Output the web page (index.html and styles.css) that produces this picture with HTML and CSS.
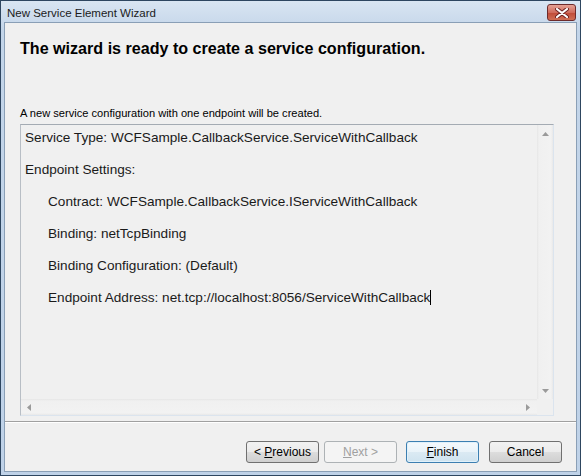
FILE: index.html
```html
<!DOCTYPE html>
<html lang="en">
<head>
    <meta charset="UTF-8">
    <title>New Service Element Wizard</title>
    <link rel="stylesheet" href="styles.css">
</head>
<body>
    <div class="window">
        <div class="titlebar">
            <span class="title">New Service Element Wizard</span>
            <div class="close-btn">
                <svg width="14" height="10" viewBox="0 0 14 10">
                    <path d="M2 1 L12 9 M12 1 L2 9" stroke="#6b2020" stroke-width="4" stroke-linecap="round"/>
                    <path d="M2 1 L12 9 M12 1 L2 9" stroke="#ffffff" stroke-width="2.2" stroke-linecap="round"/>
                </svg>
            </div>
        </div>
        <div class="client">
            <h1 class="heading">The wizard is ready to create a service configuration.</h1>
            <p class="desc">A new service configuration with one endpoint will be created.</p>
            <div class="textbox">
                <div class="text-area">
                    <p>Service Type: WCFSample.CallbackService.ServiceWithCallback</p>
                    <p>Endpoint Settings:</p>
                    <p class="indent">Contract: WCFSample.CallbackService.IServiceWithCallback</p>
                    <p class="indent">Binding: netTcpBinding</p>
                    <p class="indent">Binding Configuration: (Default)</p>
                    <p class="indent">Endpoint Address: net.tcp://localhost:8056/ServiceWithCallback<span class="caret"></span></p>
                </div>
                <div class="vscroll">
                    <svg width="7" height="4" viewBox="0 0 7 4"><polygon points="0,4 7,4 3.5,0" fill="#9a9a9a"/></svg>
                    <svg width="7" height="4" viewBox="0 0 7 4"><polygon points="0,0 7,0 3.5,4" fill="#9a9a9a"/></svg>
                </div>
                <div class="hscroll">
                    <svg width="4" height="7" viewBox="0 0 4 7"><polygon points="4,0 4,7 0,3.5" fill="#9a9a9a"/></svg>
                    <svg width="4" height="7" viewBox="0 0 4 7"><polygon points="0,0 0,7 4,3.5" fill="#9a9a9a"/></svg>
                </div>
                <div class="corner"></div>
            </div>
            <div class="footer">
                <button class="btn">&lt; <u>P</u>revious</button>
                <button class="btn disabled"><u>N</u>ext &gt;</button>
                <button class="btn default"><u>F</u>inish</button>
                <button class="btn">Cancel</button>
            </div>
        </div>
    </div>
</body>
</html>
```

FILE: styles.css
```css
body {
    margin: 0;
    background: #f0f0f0;
}
.window {
    width: 581px;
    height: 476px;
    box-sizing: border-box;
    border: 1px solid #2e4660;
    background: linear-gradient(#d9e5f2, #c3d5e9 30px, #bfd2e8);
    padding: 0 3px 3px;
    display: flex;
    flex-direction: column;
}
.titlebar {
    height: 21px;
    display: flex;
    align-items: center;
    justify-content: space-between;
}
.title {
    font-family: "Liberation Sans", Arial, sans-serif;
    font-size: 11.5px;
    color: #1b1b1b;
    padding-left: 3px;
    padding-top: 2px;
}
.close-btn {
    width: 29px;
    height: 17px;
    margin-right: 1px;
    margin-top: 2px;
    box-sizing: border-box;
    border: 1px solid #6d2b2b;
    border-radius: 3px;
    background: linear-gradient(#e5a195, #d06b5b 50%, #c04a37 51%, #cf6e54);
    display: flex;
    align-items: center;
    justify-content: center;
}
.client {
    flex: 1;
    background: #f0f0f0;
    border: 1px solid #8a9fb6;
    display: flex;
    flex-direction: column;
}
.heading {
    font-family: "Liberation Sans", Arial, sans-serif;
    font-size: 16.1px;
    font-weight: bold;
    color: #000;
    margin: 15px 0 0 15px;
    line-height: 20px;
}
.desc {
    font-family: "Liberation Sans", Arial, sans-serif;
    font-size: 11.1px;
    color: #000;
    margin: 49px 0 0 15px;
    line-height: 13px;
}
.textbox {
    margin: 4px 22px 0 15px;
    height: 292px;
    box-sizing: border-box;
    border: 1px solid #dbe4ee;
    border-top-color: #a4abb3;
    border-left-color: #b8bec5;
    display: grid;
    grid-template-columns: 1fr 16px;
    grid-template-rows: 1fr 16px;
}
.text-area {
    padding: 5px 4px 0;
    font-family: "Liberation Sans", Arial, sans-serif;
    font-size: 13.6px;
    color: #1a1a1a;
    overflow: hidden;
}
.text-area p {
    margin: 0 0 16px;
    line-height: 16px;
    white-space: nowrap;
}
.text-area .indent {
    padding-left: 23px;
}
.caret {
    display: inline-block;
    width: 1px;
    height: 15px;
    background: #000;
    vertical-align: -3px;
}
.vscroll {
    background: linear-gradient(90deg, #e6e6e6, #f0f0f0 2px, #f2f2f2 14px, #e8e8e8);
    display: flex;
    flex-direction: column;
    justify-content: space-between;
    align-items: center;
    padding: 7px 0 6px;
}
.hscroll {
    background: linear-gradient(#e6e6e6, #f0f0f0 2px, #f2f2f2 14px, #e8e8e8);
    display: flex;
    justify-content: space-between;
    align-items: center;
    padding: 0 7px 0 6px;
}
.corner {
    background: #f0f0f0;
}
.footer {
    margin-top: 5px;
    border-top: 1px solid #a0a0a0;
    box-shadow: inset 0 1px 0 #ffffff;
    flex: 1;
    display: flex;
    justify-content: flex-end;
    align-items: flex-start;
    padding: 19px 14px 0 0;
}
.btn {
    width: 73px;
    height: 22px;
    margin-left: 6px;
    box-sizing: border-box;
    border: 1px solid #707070;
    border-radius: 3px;
    background: linear-gradient(#f2f2f2, #ebebeb 50%, #dddddd 51%, #cfcfcf);
    font-family: "Liberation Sans", Arial, sans-serif;
    font-size: 12px;
    color: #000;
    padding: 0;
}
.btn.disabled {
    border-color: #adb2b5;
    background: #f4f4f4;
    color: #a0a0a0;
    margin-left: 5px;
}
.btn.default {
    border-color: #3c7fb1;
    box-shadow: inset 0 0 0 1px #e0f1fb;
    margin-left: 9px;
    background: linear-gradient(#f4f9fc, #e9f3f9 50%, #dbeaf3 51%, #cfe3ef);
}
.btn.default + .btn {
    margin-left: 10px;
}
```
